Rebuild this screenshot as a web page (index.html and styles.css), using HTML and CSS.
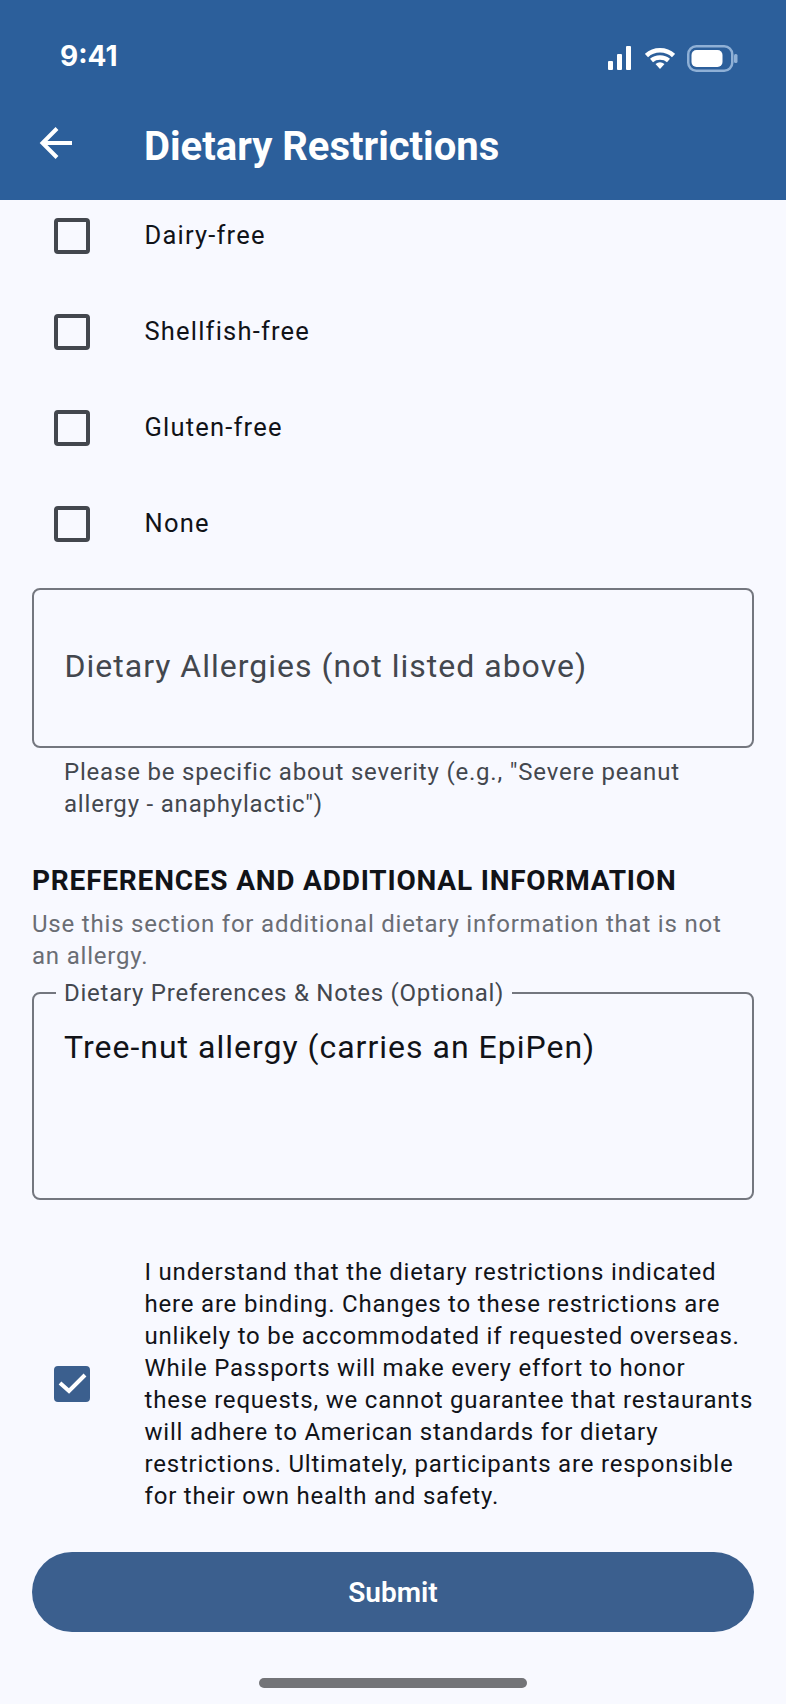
FILE: index.html
```html
<!DOCTYPE html>
<html lang="en">
<head>
<meta charset="utf-8">
<title>Dietary Restrictions</title>
<link rel="stylesheet" href="styles.css">
</head>
<body>
<div class="screen">
  <header class="appbar">
    <div class="status">
      <span class="time">9:41</span>
      <div class="status-icons">
        <svg class="sig" width="23" height="24" viewBox="0 0 23 24"><rect x="0" y="15" width="5" height="9" rx="1"/><rect x="9" y="8" width="5" height="16" rx="1"/><rect x="18" y="0" width="5" height="24" rx="1"/></svg>
        <svg class="wifi" width="30" height="21" viewBox="0 0 30 21"><path d="M1.500 7.500C9 .5 21 .5 28.500 7.500" /><path d="M6.500 12.500C11 8.500 19 8.500 23.500 12.500"/><path class="dot" d="M10.500 16 Q15 12.500 19.500 16 L15 21Z"/></svg>
        <svg class="batt" width="51" height="27" viewBox="0 0 51 27"><rect class="shell" x="1.250" y="1.250" width="44" height="24.500" rx="8"/><rect class="fill" x="4.500" y="5" width="31" height="17" rx="5"/><rect class="nub" x="47" y="9" width="3.500" height="9" rx="1.500"/></svg>
      </div>
    </div>
    <div class="toolbar">
      <svg class="back" width="36" height="36" viewBox="0 0 36 36"><path d="M33 18H4M18 3.500 3.500 18 18 32.500"/></svg>
      <h1 class="title">Dietary Restrictions</h1>
    </div>
  </header>
  <main class="content">
    <div class="list">
      <label class="row"><span class="box"></span><span class="opt">Dairy-free</span></label>
      <label class="row"><span class="box"></span><span class="opt">Shellfish-free</span></label>
      <label class="row"><span class="box"></span><span class="opt">Gluten-free</span></label>
      <label class="row"><span class="box"></span><span class="opt">None</span></label>
    </div>
    <div class="field field-empty"><span class="placeholder">Dietary Allergies (not listed above)</span></div>
    <p class="helper">Please be specific about severity (e.g., "Severe peanut allergy - anaphylactic")</p>
    <h2 class="section">PREFERENCES AND ADDITIONAL INFORMATION</h2>
    <p class="sub">Use this section for additional dietary information that is not an allergy.</p>
    <div class="field field-notes">
      <span class="float">Dietary Preferences &amp; Notes (Optional)</span>
      <span class="value">Tree-nut allergy (carries an EpiPen)</span>
    </div>
    <label class="ack">
      <span class="box checked"><svg width="30" height="30" viewBox="0 0 30 30"><path d="M3 14 12 22 28 6"/></svg></span>
      <span class="ack-text">I understand that the dietary restrictions indicated here are binding. Changes to these restrictions are unlikely to be accommodated if requested overseas. While Passports will make every effort to honor<br>these requests, we cannot guarantee that restaurants will adhere to American standards for dietary restrictions. Ultimately, participants are responsible for their own health and safety.</span>
    </label>
    <button class="submit">Submit</button>
  </main>
  <div class="home"></div>
</div>
</body>
</html>
```
FILE: styles.css
```css
* { box-sizing: border-box; }
html, body { margin: 0; padding: 0; }
body { background: #f8f9ff; font-family: Roboto, "Liberation Sans", sans-serif; color: #111318; }
.screen { width: 786px; height: 1704px; overflow: hidden; display: flex; flex-direction: column; position: relative; }
.appbar { height: 200px; background: #2c5f9b; color: #fff; position: relative; z-index: 2; flex: none; }
.status { height: 112px; padding: 38px 48px 0 60px; display: flex; justify-content: space-between; align-items: flex-start; }
.time { font: 700 28px/36px Inter, Roboto, sans-serif; }
.status-icons { display: flex; align-items: center; height: 40px; }
.sig { fill: #fff; margin-right: 14px; }
.wifi { margin-right: 12px; }
.wifi path { fill: none; stroke: #fff; stroke-width: 4.500; }
.wifi .dot { fill: #fff; stroke: none; }
.shell { fill: none; stroke: #8fb0d6; stroke-width: 2.500; }
.fill { fill: #fff; }
.nub { fill: #8fb0d6; }
.toolbar { display: flex; align-items: center; height: 60px; padding-left: 39px; }
.back { fill: none; stroke: #fff; stroke-width: 4; margin: 2px 69px 0 0; flex: none; }
.title { margin: 0; padding-top: 9px; font-size: 40px; font-weight: 700; line-height: 44px; }
.content { flex: 1; padding: 0 32px; display: flex; flex-direction: column; }
.list { margin-top: -12px; }
.row { display: flex; align-items: center; height: 96px; padding-left: 22px; }
.box { width: 36px; height: 36px; border: 4px solid #43474e; border-radius: 4px; flex: none; }
.opt { margin: 0 0 2px 54.500px; font-size: 25.500px; letter-spacing: 1.200px; line-height: 36px; }
.field { width: 722px; border: 2px solid #74777f; border-radius: 8px; position: relative; }
.field-empty { margin-top: 16px; height: 160px; display: flex; align-items: center; padding: 0 0 4px 30.500px; }
.placeholder { font-size: 32px; letter-spacing: 1px; color: #43474e; }
.helper { margin: 8px 0 0 32px; font-size: 24px; line-height: 32px; letter-spacing: 0.800px; color: #43474e; width: 660px; }
.section { margin: 43px 0 0; font-size: 28px; line-height: 36px; font-weight: 700; letter-spacing: 0.800px; }
.sub { margin: 9px 0 0; font-size: 24px; line-height: 32px; letter-spacing: 0.800px; color: #6a6d74; }
.field-notes { margin-top: 20px; height: 208px; padding: 31px 0 0 30px; }
.float { position: absolute; left: 22px; top: -17px; background: #f8f9ff; padding: 0 8px; font-size: 24px; line-height: 32px; letter-spacing: 0.750px; color: #43474e; }
.value { font-size: 32px; line-height: 44px; letter-spacing: 1px; }
.ack { display: flex; align-items: center; margin-top: 56px; padding-left: 22px; }
.checked { background: #3b5f8e; border-color: #3b5f8e; display: flex; align-items: center; justify-content: center; }
.checked svg { fill: none; stroke: #fff; stroke-width: 4; flex: none; }
.ack-text { margin-left: 54.500px; font-size: 24px; line-height: 32px; letter-spacing: 0.800px; width: 616px; flex: none; }
.submit { margin-top: 40px; width: 722px; height: 80px; border: 0; border-radius: 40px; background: #3b5f8e; color: #fff; font: 600 28px Roboto, sans-serif; }
.home { position: absolute; left: 259px; top: 1678px; width: 268px; height: 10px; border-radius: 5px; background: #737478; }
```
